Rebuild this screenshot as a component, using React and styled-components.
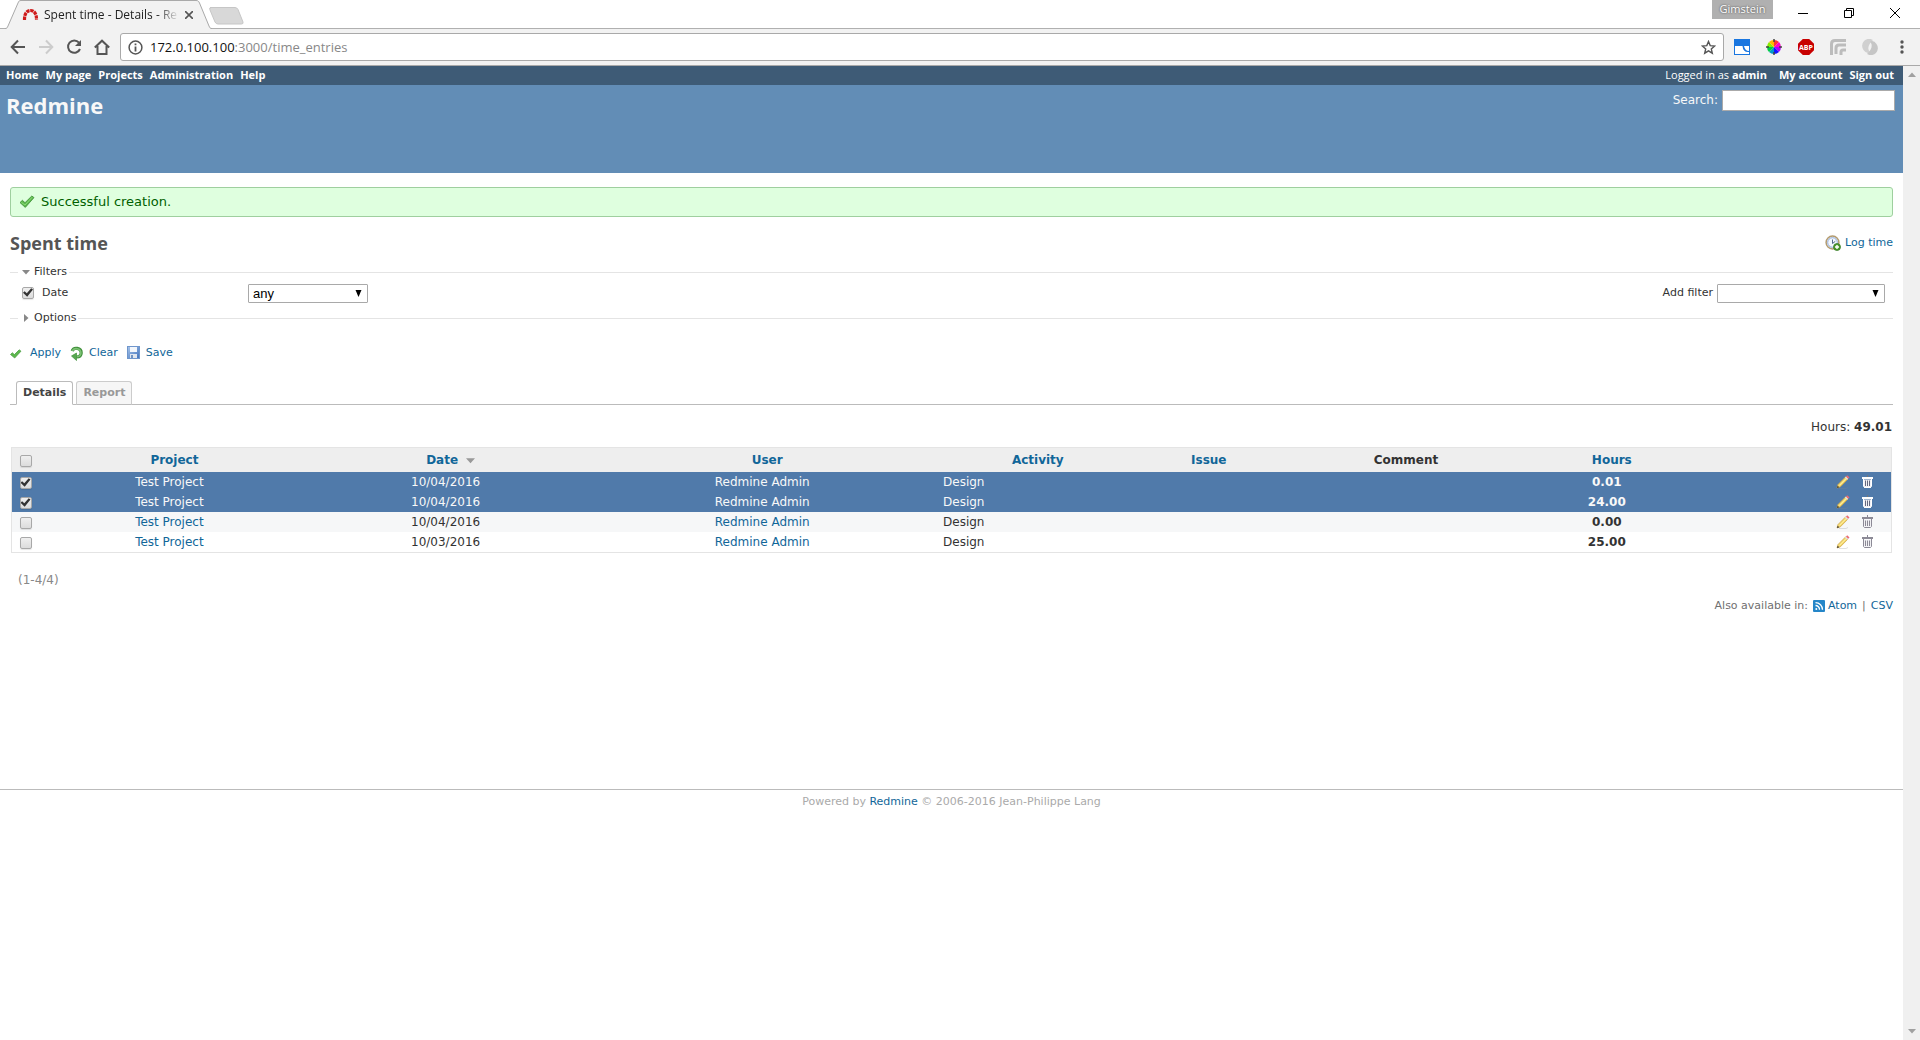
import React, { useState } from "react";
import styled, { createGlobalStyle, css } from "styled-components";

const sans = '"DejaVu Sans", "Noto Sans", sans-serif';
const ui = '"Open Sans", "Noto Sans", sans-serif';
const link = "#116699";

const GlobalStyle = createGlobalStyle`
  *, *::before, *::after { box-sizing: border-box; }
  body { margin: 0; background: #fff; color: #333; font: 12px/16px ${sans}; }
  h1, h2, p { margin: 0; }
  button { font: inherit; color: inherit; background: none; border: 0; padding: 0; }
  a { text-decoration: none; color: ${link}; }
  svg { display: block; flex: none; }
`;

const Window = styled.div`
  display: flex;
  flex-direction: column;
  min-height: 100vh;
`;

/* ---------- browser frame ---------- */

const TabStrip = styled.div`
  display: flex;
  justify-content: space-between;
  height: 29px;
  border-bottom: 1px solid #b0b0b0;
  font-family: ${ui};
`;

const TabGroup = styled.div`
  display: flex;
  padding-left: 5px;
`;

const BrowserTab = styled.div`
  position: relative;
  display: flex;
  align-items: center;
  width: 207px;
  height: 29px;
  padding: 1px 19px 0 17px;
  color: #222;
`;

const TabShape = styled.svg`
  position: absolute;
  inset: 0;
`;

const TabTitle = styled.span`
  position: relative;
  flex: 1;
  min-width: 0;
  margin: 0 6px 0 5px;
  white-space: nowrap;
  mask-image: linear-gradient(to right, #000 84%, transparent);
`;

const TabIcon = styled.svg`
  position: relative;
`;

const NewTab = styled.button`
  display: flex;
  align-items: flex-start;
  padding-top: 7px;
  margin-left: -3px;
`;

const WindowControls = styled.div`
  display: flex;
  align-items: flex-start;
  padding-right: 2px;
`;

const UserBadge = styled.span`
  width: 61px;
  height: 19px;
  margin-right: 7px;
  background: #b0b0b0;
  color: #fff;
  font-size: 11px;
  line-height: 18px;
  text-align: center;
  text-shadow: 0 0 2px #333;
`;

const ControlButton = styled.button`
  display: grid;
  place-items: center;
  width: 46px;
  height: 26px;
`;

const Toolbar = styled.div`
  display: flex;
  align-items: center;
  height: 37px;
  padding: 0 2px 0 4px;
  background: #f2f2f2;
  border-bottom: 1px solid #a9a9a9;
`;

const ToolButton = styled.button`
  display: grid;
  place-items: center;
  width: ${(p) => (p.$wide ? 32 : 28)}px;
  height: 28px;
`;

const AddressBox = styled.div`
  display: flex;
  flex: 1;
  align-items: center;
  height: 28px;
  margin: 0 2px 0 4px;
  padding: 0 7px;
  background: #fff;
  border: 1px solid #a9a9a9;
  border-radius: 3px;
  font: 13px/20px ${ui};
  color: #888;
`;

const AddressText = styled.div`
  flex: 1;
  margin-left: 7px;
  b { font-weight: 400; color: #111; }
`;

const Viewport = styled.div`
  display: flex;
  flex: 1;
`;

const Page = styled.div`
  flex: 1;
  min-width: 0;
`;

const ScrollTrack = styled.div`
  display: flex;
  flex-direction: column;
  justify-content: space-between;
  align-items: center;
  width: 17px;
  padding: 5px 0;
  background: #f0f0f0;
`;

/* ---------- application header ---------- */

const TopMenu = styled.nav`
  display: flex;
  justify-content: space-between;
  height: 19px;
  padding: 0 9px 0 6px;
  background: #3e5b76;
  color: #fff;
  font: 11px/17px ${ui};
`;

const MenuGroup = styled.div`
  display: flex;
  gap: 7px;
`;

const MenuLink = styled.a`
  color: #fff;
  font-weight: 700;
`;

const LoggedIn = styled.span`
  margin-right: 5px;
`;

const Header = styled.header`
  display: flex;
  justify-content: space-between;
  align-items: flex-start;
  height: 88px;
  padding: 4px 8px 0 6px;
  background: #628db6;
  color: #f8f8f8;
`;

const AppTitle = styled.h1`
  font: 700 22px/32px ${ui};
`;

const SearchForm = styled.form`
  display: flex;
  gap: 4px;
  padding-top: 1px;
  line-height: 20px;
`;

const SearchInput = styled.input`
  width: 173px;
  height: 21px;
  padding: 3px;
  border: 1px solid #aaa;
  background: #fff;
`;

/* ---------- content ---------- */

const Content = styled.main`
  min-height: 616px;
  padding: 14px 10px;
`;

const Flash = styled.div`
  display: flex;
  align-items: center;
  gap: 6px;
  height: 30px;
  padding: 0 8px;
  border: 1px solid #9fcf9f;
  border-radius: 3px;
  background: #dfffdf;
  color: #005f00;
  font-size: 13px;
`;

const TitleRow = styled.div`
  display: flex;
  justify-content: space-between;
  align-items: center;
  height: 24px;
  margin: 14px 0 10px;
`;

const PageTitle = styled.h2`
  color: #555;
  font: 700 18px/24px ${ui};
`;

const IconLink = styled.a`
  display: flex;
  align-items: center;
  gap: 4px;
  font-size: 11px;
`;

const FieldGroup = styled.fieldset`
  min-width: 0;
  margin: 0;
  padding: ${(p) => (p.$open ? "5px 8px 8px" : "0 8px")};
  border: 0;
  border-top: 1px solid #e4e4e4;
  font-size: 11px;
`;

const Legend = styled.legend`
  padding: 0 2px 0 4px;
  line-height: 14px;
`;

const LegendButton = styled.button`
  display: flex;
  align-items: center;
  gap: 4px;
`;

const FilterRow = styled.div`
  display: flex;
  align-items: center;
  height: 19px;
  line-height: 14px;
`;

const FilterName = styled.label`
  display: flex;
  align-items: center;
  gap: 8px;
  width: 230px;
  padding: 0 0 2px 4px;
`;

const AddFilter = styled.div`
  display: flex;
  align-items: center;
  gap: 4px;
  margin-left: auto;
  label { padding-bottom: 2px; }
`;

const SelectWrap = styled.span`
  position: relative;
  display: block;
  width: ${(p) => p.$width}px;
  svg { position: absolute; right: 6px; top: 6px; pointer-events: none; }
`;

const SelectBox = styled.select`
  display: block;
  width: 100%;
  height: 19px;
  padding: 0 4px;
  appearance: none;
  border: 1px solid #a9a9a9;
  border-radius: 1px;
  background: #fff;
  color: #000;
  font: 13px/17px "Liberation Sans", Arial, sans-serif;
`;

const CheckInput = styled.input.attrs({ type: "checkbox" })`
  display: inline-grid;
  place-items: center;
  width: 12px;
  height: 12px;
  margin: 0;
  appearance: none;
  vertical-align: middle;
  border: 1px solid #a8a8a8;
  border-radius: 2px;
  background: linear-gradient(#efefef, #dcdcdc);
  box-shadow: 0 1px 1px rgba(0, 0, 0, 0.1);
  &:checked::before {
    content: "";
    width: 10px;
    height: 9px;
    background: #333;
    clip-path: polygon(0 52%, 16% 36%, 38% 58%, 82% 2%, 100% 18%, 42% 98%);
  }
`;

const Actions = styled.p`
  display: flex;
  gap: 8px;
  height: 16px;
  margin: 20px 0;
`;

const Tabs = styled.div`
  display: flex;
  gap: 3px;
  height: 24px;
  padding-left: 6px;
  border-bottom: 1px solid #bbb;
`;

const TabLink = styled.a`
  height: 24px;
  padding: 0 6px;
  border: 1px solid #ccc;
  border-bottom-color: #bbb;
  border-radius: 3px 3px 0 0;
  background: #f6f6f6;
  color: #999;
  font-size: 11px;
  font-weight: 700;
  line-height: 22px;
  ${(p) =>
    p.$selected &&
    css`
      border-color: #bbb;
      border-bottom-color: #fff;
      background: #fff;
      color: #444;
    `}
`;

const Totals = styled.p`
  margin: 14px 1px 12px 0;
  text-align: right;
`;

const Entries = styled.table`
  width: calc(100% - 2px);
  margin: 0 1px;
  table-layout: fixed;
  border-collapse: separate;
  border-spacing: 0;
  border: 1px solid #e4e4e4;
`;

const Col = styled.col`
  width: ${(p) => p.$width};
`;

const HeadCell = styled.th`
  height: 24px;
  padding: 0 ${(p) => (p.$check ? 2 : 0)}px 0 0;
  background: #eee;
  text-align: center;
`;

const SortLink = styled.a`
  display: inline-flex;
  align-items: center;
  gap: 8px;
`;

const Row = styled.tr`
  background: ${(p) => (p.$selected ? "#507aaa" : p.$odd ? "#f6f7f8" : "#fff")};
  color: ${(p) => (p.$selected ? "#f8f8f8" : "#333")};
  a { color: ${(p) => (p.$selected ? "#f8f8f8" : link)}; }
`;

const Cell = styled.td`
  height: 20px;
  padding: 0 10px 1px 0;
  text-align: center;
  line-height: 18px;
`;

const CheckCell = styled(Cell)`
  padding: 0 2px 0 0;
`;

const ActivityCell = styled(Cell)`
  padding-left: 2px;
  text-align: left;
`;

const HoursCell = styled(Cell)`
  font-weight: 700;
`;

const RowActions = styled.div`
  display: flex;
  justify-content: flex-end;
  gap: 8px;
  padding-right: 6px;
`;

const Pagination = styled.p`
  margin: 19px 8px 11px;
  color: #888;
`;

const Formats = styled.p`
  display: flex;
  justify-content: flex-end;
  align-items: center;
  gap: 5px;
  color: #707070;
  font-size: 11px;
  line-height: 14px;
`;

const AtomLink = styled.a`
  display: flex;
  align-items: center;
  gap: 3px;
`;

const Footer = styled.footer`
  padding: 4px 0;
  border-top: 1px solid #bbb;
  color: #aaa;
  font-size: 11px;
  text-align: center;
`;

/* ---------- icons ---------- */

const CheckIcon = () => (
  <svg width="16" height="16" viewBox="0 0 16 16">
    <path d="M1 8.6 3.4 6.3 6 8.7 12.8 2 15 3.6 6.3 13.4Z" fill="#5cb84c" stroke="#3c8f35" strokeWidth=".8" />
    <path d="M2.4 8.4 6 11 13.2 3.2" fill="none" stroke="#8bdc78" />
  </svg>
);

const ApplyIcon = () => (
  <svg width="16" height="16" viewBox="0 0 16 16">
    <path d="M.5 9.5 2.3 7.700 4.400 9.600 9.200 4.800 11 6.200 4.700 13Z" fill="#5cb84c" stroke="#46983d" strokeWidth=".7" />
  </svg>
);

const ClearIcon = () => (
  <svg width="16" height="16" viewBox="0 0 16 16">
    <path d="M3.200 6C4.500 1.800 12.300 2.500 12.200 8C12.100 10.600 10 12 7.500 12" fill="none" stroke="#3f8f3a" strokeWidth="3.200" />
    <path d="M3.400 6C4.700 2.300 12 2.900 11.900 8C11.800 10.300 9.800 11.700 7.500 11.700" fill="none" stroke="#7cc274" strokeWidth="1.600" />
    <path d="M2.500 11 7.500 8V15.500Z" fill="#57a850" stroke="#3f8f3a" strokeWidth=".7" />
  </svg>
);

const SaveIcon = () => (
  <svg width="16" height="16" viewBox="0 0 16 16">
    <defs>
      <linearGradient id="disk" x1="0" y1="0" x2="1" y2="1">
        <stop offset="0" stopColor="#a9c5ea" />
        <stop offset="1" stopColor="#3f72bd" />
      </linearGradient>
    </defs>
    <rect x="1.500" y="1.500" width="12" height="12" fill="url(#disk)" stroke="#6f96cc" />
    <rect x="4" y="2" width="7" height="5" fill="#f3f7fc" />
    <rect x="4" y="9" width="7" height="4" fill="#dfe6ef" />
    <rect x="5" y="10" width="2" height="3" fill="#6f93c4" />
  </svg>
);

const LogTimeIcon = () => (
  <svg width="16" height="16" viewBox="0 0 16 16">
    <circle cx="7.5" cy="7.5" r="6.4" fill="#eef3fa" stroke="#b39b70" strokeWidth="1.5" />
    <circle cx="7.5" cy="7.5" r="4.8" fill="#f4f8ff" stroke="#8fabd8" />
    <path d="M7.5 4.5V8.5L10.3 6.3" fill="none" stroke="#52688a" />
    <circle cx="12" cy="12" r="3.5" fill="#4d9a2c" stroke="#2f7420" strokeWidth=".7" />
    <path d="M12 10v4M10 12h4" stroke="#fff" strokeWidth="1.4" />
  </svg>
);

const PencilIcon = () => (
  <svg width="16" height="16" viewBox="0 0 16 16">
    <path d="M4 14.500H11L13 13.500" stroke="#888" strokeOpacity=".25" fill="none" />
    <path d="M2 14 3 10.5 10.7 2.8 13 5 5.4 12.8Z" fill="#f4d766" stroke="#c9a04a" strokeWidth=".7" />
    <path d="M4.3 11.5 11.6 4.1" stroke="#fff2ad" />
    <path d="M2 14 2.7 11.7 4.3 13.2Z" fill="#333" />
    <path d="M10 3.500 11 2.500 13.200 4.800 12.200 5.800Z" fill="#dfe3ee" />
    <path d="M11 2.500 12.200 1.300 14.500 3.500 13.200 4.800Z" fill="#ea6b72" />
  </svg>
);

const TrashIcon = ({ light }) => {
  const line = light ? "#fff" : "#8c8a96";
  return (
    <svg width="16" height="16" viewBox="0 0 16 16">
      <path d="M8.500 1V3" stroke={light ? "#777" : line} />
      <rect x="3.500" y="3.500" width="10" height="1" fill="none" stroke={line} />
      <path d="M5 5.500V14H12V5.500Z" fill={light ? "#f2f2f6" : "#f1f1f4"} />
      <path d="M4.500 5V12.500L5.500 13.500H11.500L12.500 12.500V5" fill="none" stroke={line} />
      <path d="M6.500 6.500V12M8.500 6.500V12M10.500 6.500V12" stroke={light ? "#666a80" : "#8c8a96"} />
    </svg>
  );
};

const FeedIcon = () => (
  <svg width="12" height="12" viewBox="0 0 12 12">
    <rect width="12" height="12" rx="1" fill="#2586c8" />
    <path d="M2.5 5.5A4 4 0 0 1 6.5 9.8M2.5 2.6A7 7 0 0 1 9.5 9.8" fill="none" stroke="#fff" strokeWidth="1.3" />
    <circle cx="3.3" cy="9" r="1" fill="#fff" />
  </svg>
);

const SelectArrow = () => (
  <svg width="7" height="7" viewBox="0 0 7 7">
    <path d="M.5 0H6.500L3.500 7Z" fill="#000" />
  </svg>
);

const Caret = ({ dir, size = 8, color = "#888" }) => {
  const shapes = { down: "M0 2H8L4 6.500Z", up: "M0 6H8L4 1.500Z", right: "M2 0V8L6.500 4Z" };
  return (
    <svg width={size} height={size} viewBox="0 0 8 8">
      <path d={shapes[dir]} fill={color} />
    </svg>
  );
};

/* ---------- parts ---------- */

function BrowserChrome() {
  return (
    <>
      <TabStrip>
        <TabGroup>
          <BrowserTab>
            <TabShape width="207" height="29" viewBox="0 0 207 29">
              <path d="M0 29 1 28.5C2 28 2 28 3 26L13 3C14 1 14 .5 16 .5H191C193 .5 193.500 1 194.500 3L204 26C205 28 205 28.500 207 29Z" fill="#f2f2f2" />
              <path d="M0 28.500C2 28.500 2 28 3 26L13 3C14 1 14 .5 16 .5H191C193 .5 193.500 1 194.500 3L204 26C205 28 205 28.500 207 28.500" fill="none" stroke="#a9a9a9" />
            </TabShape>
            <TabIcon width="17" height="16" viewBox="0 0 17 16">
              <path d="M2.500 13C2.300 6.500 5 3.500 8.500 3.500S14.700 6.500 14.500 13" fill="none" stroke="#cf1a1a" strokeWidth="3.200" strokeDasharray="3.400 .7" />
            </TabIcon>
            <TabTitle>Spent time - Details - Re</TabTitle>
            <TabIcon width="8" height="8" viewBox="0 0 8 8">
              <path d="M0 0 8 8M8 0 0 8" stroke="#555" strokeWidth="1.600" />
            </TabIcon>
          </BrowserTab>
          <NewTab aria-label="New tab">
            <svg width="36" height="18" viewBox="0 0 36 18">
              <path d="M1 .5H26Q28 .5 29 2.500L34 15Q34.500 17 32.500 17H9Q7 17 6 15L.8 2.500Q.2 .5 2 .5Z" fill="#d8d8d8" stroke="#c6c6c6" />
            </svg>
          </NewTab>
        </TabGroup>
        <WindowControls>
          <UserBadge>Gimstein</UserBadge>
          <ControlButton aria-label="Minimize">
            <svg width="10" height="10"><path d="M0 5.500H10" stroke="#000" /></svg>
          </ControlButton>
          <ControlButton aria-label="Restore">
            <svg width="10" height="10" fill="none" stroke="#000">
              <path d="M.5 2.500H7.500V9.500H.5ZM2.500 2.500V.5H9.500V7.500H7.500" />
            </svg>
          </ControlButton>
          <ControlButton aria-label="Close">
            <svg width="10" height="10"><path d="M0 0 10 10M10 0 0 10" stroke="#000" /></svg>
          </ControlButton>
        </WindowControls>
      </TabStrip>
      <Toolbar>
        <ToolButton aria-label="Back">
          <svg width="16" height="16" fill="none" stroke="#555" strokeWidth="2">
            <path d="M15 8H2.500M8 1.500 1.700 8 8 14.500" />
          </svg>
        </ToolButton>
        <ToolButton aria-label="Forward">
          <svg width="16" height="16" fill="none" stroke="#ccc" strokeWidth="2">
            <path d="M1 8H13.500M8 1.500 14.300 8 8 14.500" />
          </svg>
        </ToolButton>
        <ToolButton aria-label="Reload">
          <svg width="16" height="16" fill="none">
            <path d="M13 3.600A6.200 6.200 0 1 0 14 10" stroke="#555" strokeWidth="2" />
            <path d="M15 1V7H9Z" fill="#555" />
          </svg>
        </ToolButton>
        <ToolButton aria-label="Home">
          <svg width="16" height="16" fill="none" stroke="#555" strokeWidth="2">
            <path d="M.8 8.500 8 1.700 15.200 8.500M3.500 7V15H12.500V7" />
          </svg>
        </ToolButton>
        <AddressBox>
          <svg width="15" height="15" fill="none" stroke="#555">
            <circle cx="7.500" cy="7.500" r="6.400" strokeWidth="1.500" />
            <path d="M7.500 6.500V11.500M7.500 3.500V5.200" strokeWidth="1.800" />
          </svg>
          <AddressText><b>172.0.100.100</b>:3000/time_entries</AddressText>
          <svg width="15" height="15" viewBox="0 0 15 15" fill="none" stroke="#555" strokeWidth="1.400">
            <path d="M7.500 1.500 9.200 5.600 13.700 6 10.300 8.900 11.300 13.200 7.500 10.900 3.700 13.200 4.700 8.900 1.300 6 5.800 5.600Z" />
          </svg>
        </AddressBox>
        <ToolButton $wide aria-label="Window extension">
          <svg width="16" height="16">
            <rect width="16" height="16" fill="#1976e0" />
            <path d="M1 7H8.500Q9 13 14 13H15V15H1ZM10 7H15V12Q11 12 10 7Z" fill="#fff" />
          </svg>
        </ToolButton>
        <ToolButton $wide aria-label="Color wheel">
          <svg width="16" height="16" viewBox="-8 -8 16 16">
            <path d="M0 0V-7A7 7 0 0 1 5-5Z" fill="#f33" />
            <path d="M0 0 5-5A7 7 0 0 1 7 0Z" fill="#f0c" />
            <path d="M0 0H7A7 7 0 0 1 5 5Z" fill="#a0f" />
            <path d="M0 0 5 5A7 7 0 0 1 0 7Z" fill="#11f" />
            <path d="M0 0V7A7 7 0 0 1-5 5Z" fill="#09c" />
            <path d="M0 0-5 5A7 7 0 0 1-7 0Z" fill="#0c4" />
            <path d="M0 0H-7A7 7 0 0 1-5-5Z" fill="#8e0" />
            <path d="M0 0-5-5A7 7 0 0 1 0-7Z" fill="#fb0" />
            <path d="M0-8V-5M0 8V5M-8 0H-5M8 0H5" stroke="#444" strokeWidth="1.500" />
          </svg>
        </ToolButton>
        <ToolButton $wide aria-label="Ad blocker">
          <svg width="16" height="16" viewBox="0 0 16 16">
            <path d="M4.800 0H11.200L16 4.800V11.200L11.200 16H4.800L0 11.200V4.800Z" fill="#c80000" />
            <text x="8" y="10.500" textAnchor="middle" fontFamily="Open Sans, sans-serif" fontSize="7" fontWeight="700" fill="#fff">ABP</text>
          </svg>
        </ToolButton>
        <ToolButton $wide aria-label="Feed extension">
          <svg width="16" height="16" fill="none" stroke="#bcbcbc" strokeWidth="3">
            <path d="M1.500 16V5Q1.500 1.500 5 1.500H16M6 15V9Q6 6 9 6H16M11 16V13Q11 11 13 11H16" />
          </svg>
        </ToolButton>
        <ToolButton $wide aria-label="Swirl extension">
          <svg width="16" height="16" fill="none">
            <path d="M11 1A7 7 0 0 0 1.500 11Q4 15 8 13.500Q3.500 8 11 1Z" fill="#d0d0d0" />
            <path d="M5 15A7 7 0 0 0 14.500 5Q12 1 8 2.500Q12.500 8 5 15Z" fill="#c6c6c6" />
          </svg>
        </ToolButton>
        <ToolButton $wide aria-label="Browser menu">
          <svg width="4" height="14" fill="#555">
            <circle cx="2" cy="2" r="1.700" /><circle cx="2" cy="7" r="1.700" /><circle cx="2" cy="12" r="1.700" />
          </svg>
        </ToolButton>
      </Toolbar>
    </>
  );
}

function Dropdown({ id, label, width, options }) {
  return (
    <SelectWrap $width={width}>
      <SelectBox id={id} aria-label={label}>
        {options.map((o) => <option key={o}>{o}</option>)}
      </SelectBox>
      <SelectArrow />
    </SelectWrap>
  );
}

const columns = [
  { label: "Project", width: "14.2%", sortable: true },
  { label: "Date", width: "15.2%", sortable: true, sorted: true },
  { label: "User", width: "18.5%", sortable: true },
  { label: "Activity", width: "10.3%", sortable: true },
  { label: "Issue", width: "7.9%", sortable: true },
  { label: "Comment", width: "13.1%" },
  { label: "Hours", width: "8.8%", sortable: true },
];

const initialEntries = [
  { id: 4, date: "10/04/2016", hours: "0.01", selected: true },
  { id: 3, date: "10/04/2016", hours: "24.00", selected: true },
  { id: 2, date: "10/04/2016", hours: "0.00", selected: false },
  { id: 1, date: "10/03/2016", hours: "25.00", selected: false },
];

function EntryTable() {
  const [entries, setEntries] = useState(initialEntries);
  const toggle = (id) =>
    setEntries(entries.map((e) => (e.id === id ? { ...e, selected: !e.selected } : e)));
  return (
    <Entries>
      <colgroup>
        <Col $width="29px" />
        {columns.map((c) => <Col key={c.label} $width={c.width} />)}
        <Col $width="auto" />
      </colgroup>
      <thead>
        <tr>
          <HeadCell $check><CheckInput aria-label="Check all" /></HeadCell>
          {columns.map((c) => (
            <HeadCell key={c.label}>
              {c.sortable ? (
                <SortLink href="#sort">
                  {c.label}
                  {c.sorted && <Caret dir="down" size={9} color="#999" />}
                </SortLink>
              ) : c.label}
            </HeadCell>
          ))}
          <HeadCell />
        </tr>
      </thead>
      <tbody>
        {entries.map((e, i) => (
          <Row key={e.id} $selected={e.selected} $odd={i % 2 === 0}>
            <CheckCell>
              <CheckInput aria-label={`Entry ${e.id}`} checked={e.selected} onChange={() => toggle(e.id)} />
            </CheckCell>
            <Cell><a href="#project">Test Project</a></Cell>
            <Cell>{e.date}</Cell>
            <Cell><a href="#user">Redmine Admin</a></Cell>
            <ActivityCell>Design</ActivityCell>
            <Cell />
            <Cell />
            <HoursCell>{e.hours}</HoursCell>
            <Cell>
              <RowActions>
                <a href="#edit" aria-label="Edit"><PencilIcon /></a>
                <a href="#delete" aria-label="Delete"><TrashIcon light={e.selected} /></a>
              </RowActions>
            </Cell>
          </Row>
        ))}
      </tbody>
    </Entries>
  );
}

export default function App() {
  return (
    <Window>
      <GlobalStyle />
      <BrowserChrome />
      <Viewport>
        <Page>
          <TopMenu>
            <MenuGroup>
              {["Home", "My page", "Projects", "Administration", "Help"].map((t) => (
                <MenuLink key={t} href="#menu">{t}</MenuLink>
              ))}
            </MenuGroup>
            <MenuGroup>
              <LoggedIn>Logged in as <MenuLink href="#admin">admin</MenuLink></LoggedIn>
              <MenuLink href="#account">My account</MenuLink>
              <MenuLink href="#logout">Sign out</MenuLink>
            </MenuGroup>
          </TopMenu>
          <Header>
            <AppTitle>Redmine</AppTitle>
            <SearchForm>
              <label htmlFor="q">Search:</label>
              <SearchInput id="q" type="text" />
            </SearchForm>
          </Header>
          <Content>
            <Flash><CheckIcon />Successful creation.</Flash>
            <TitleRow>
              <PageTitle>Spent time</PageTitle>
              <IconLink href="#log"><LogTimeIcon />Log time</IconLink>
            </TitleRow>
            <FieldGroup $open>
              <Legend><LegendButton type="button"><Caret dir="down" />Filters</LegendButton></Legend>
              <FilterRow>
                <FilterName><CheckInput defaultChecked />Date</FilterName>
                <Dropdown id="date-operator" label="Date operator" width={120} options={["any"]} />
                <AddFilter>
                  <label htmlFor="add-filter">Add filter</label>
                  <Dropdown id="add-filter" width={168} options={[""]} />
                </AddFilter>
              </FilterRow>
            </FieldGroup>
            <FieldGroup>
              <Legend><LegendButton type="button"><Caret dir="right" />Options</LegendButton></Legend>
            </FieldGroup>
            <Actions>
              <IconLink href="#apply"><ApplyIcon />Apply</IconLink>
              <IconLink href="#clear"><ClearIcon />Clear</IconLink>
              <IconLink href="#save"><SaveIcon />Save</IconLink>
            </Actions>
            <Tabs>
              <TabLink $selected href="#details">Details</TabLink>
              <TabLink href="#report">Report</TabLink>
            </Tabs>
            <Totals>Hours: <b>49.01</b></Totals>
            <EntryTable />
            <Pagination>(1-4/4)</Pagination>
            <Formats>
              Also available in:
              <AtomLink href="#atom"><FeedIcon />Atom</AtomLink>
              |
              <a href="#csv">CSV</a>
            </Formats>
          </Content>
          <Footer>
            Powered by <a href="#redmine">Redmine</a> © 2006-2016 Jean-Philippe Lang
          </Footer>
        </Page>
        <ScrollTrack>
          <Caret dir="up" color="#a0a0a0" />
          <Caret dir="down" color="#a0a0a0" />
        </ScrollTrack>
      </Viewport>
    </Window>
  );
}
